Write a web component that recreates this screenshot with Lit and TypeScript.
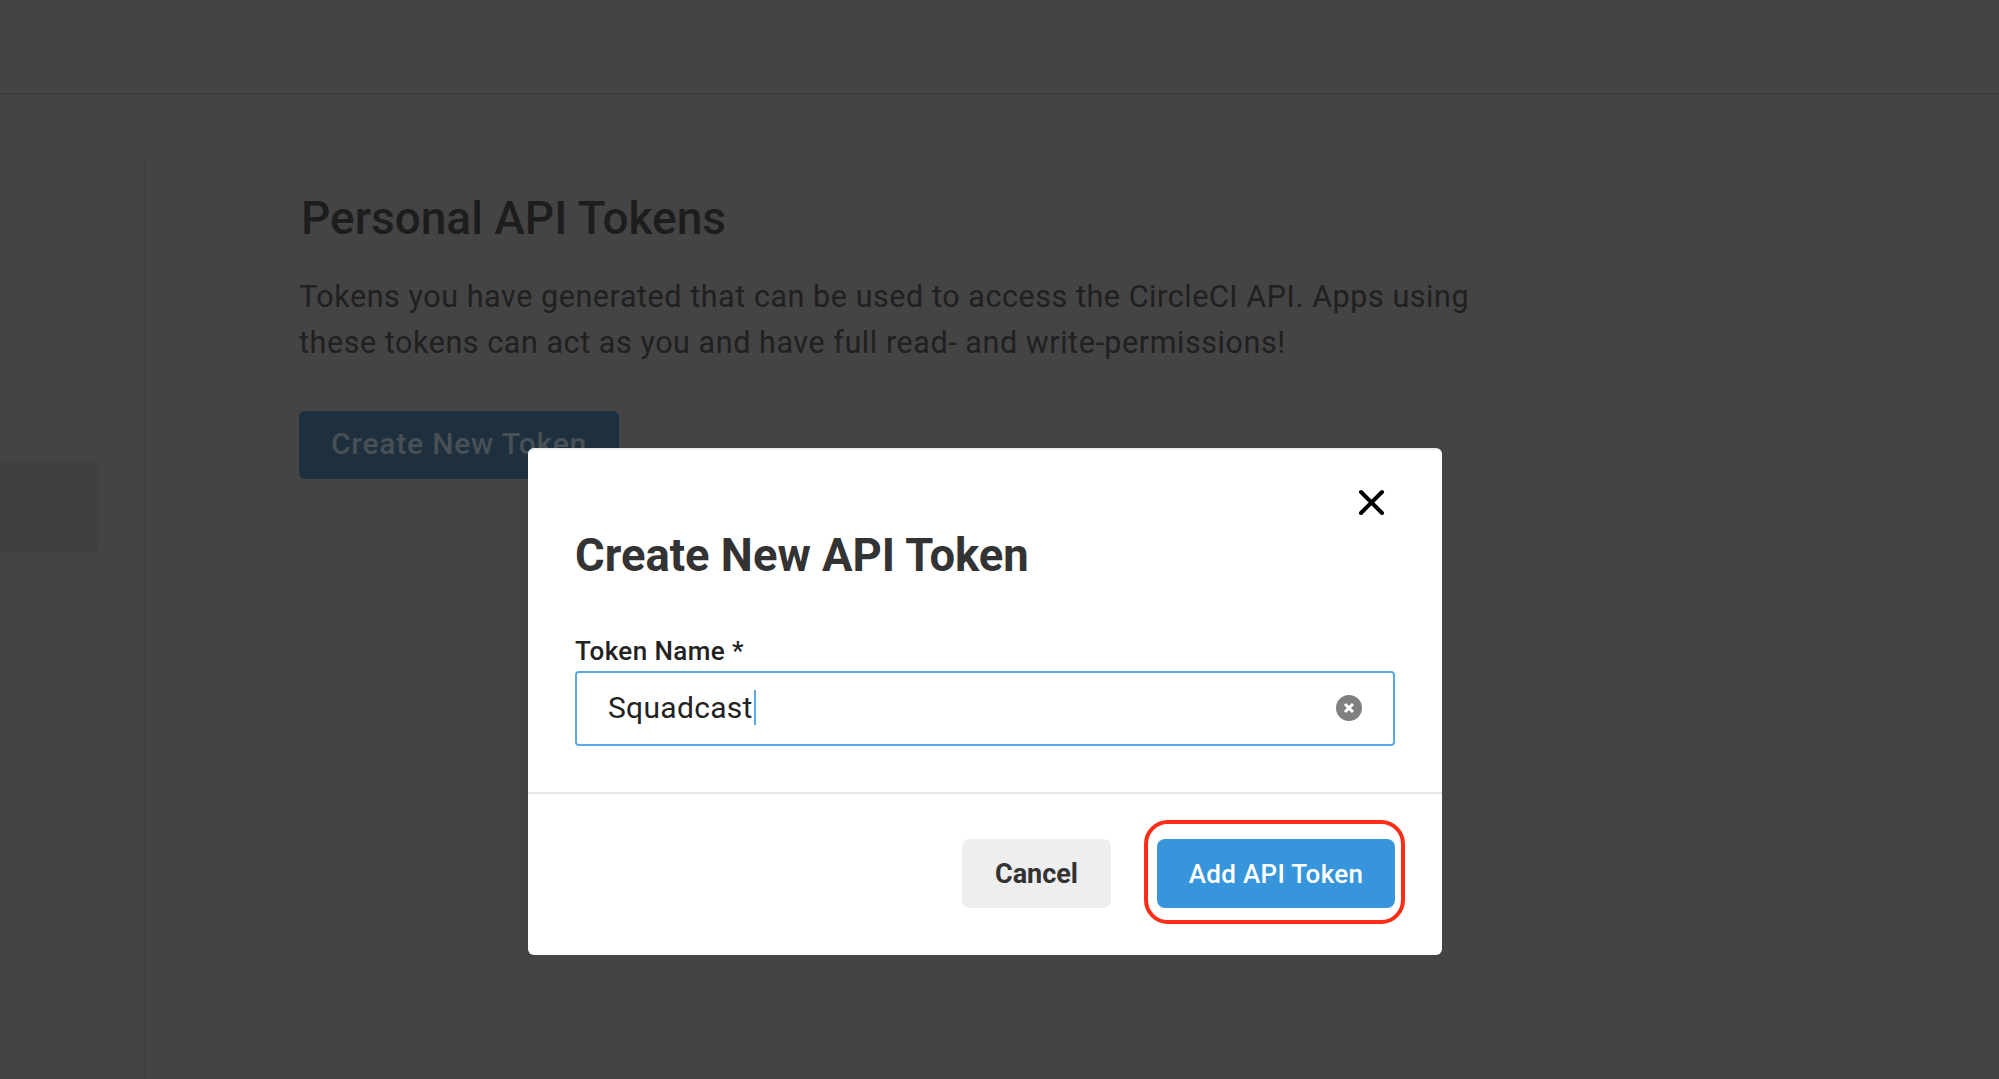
import { LitElement, html, css } from "lit";
import { customElement } from "lit/decorators.js";

@customElement("app-root")
export class AppRoot extends LitElement {
  static styles = css`
    :host { display: block; }
    * { box-sizing: border-box; }
    .page {
      position: relative; width: 1999px; height: 1079px; overflow: hidden;
      background: #444444; font-family: Roboto, "Liberation Sans", sans-serif;
      display: flex; flex-direction: column;
    }
    .topbar { height: 94px; flex: none; border-bottom: 1px solid #383838; }
    .body { flex: 1; display: flex; min-height: 0; }
    .side { width: 146px; flex: none; margin-top: 62px; border-right: 1px solid #3a3a3a; padding-top: 305px; }
    .side-item { width: 99px; height: 91px; background: #404040; border-radius: 0 4px 4px 0; }
    .content { padding: 0 0 0 153px; flex: 1; }
    h1 { margin: 97px 0 0 2px; font-size: 46px; line-height: 54px; font-weight: 500; color: #1d1d1d; }
    p { margin: 29px 0 0; width: 1200px; font-size: 30.5px; line-height: 46px; letter-spacing: 0.56px; color: #202020; }
    .create {
      margin-top: 45px; width: 320px; height: 68px; border-radius: 6px; background: #1e2f3d;
      color: #495055; font-size: 30px; font-weight: 500; letter-spacing: 0.8px; padding-bottom: 3px;
      display: flex; align-items: center; justify-content: center;
    }
    .modal {
      position: absolute; left: 528px; top: 448px; width: 914px; height: 507px;
      background: #fff; border-radius: 6px; border-top: 2px solid #eee;
      display: flex; flex-direction: column;
    }
    .close { position: absolute; top: 39px; right: 57px; width: 27px; height: 27px; display: block; }
    .main { padding: 78px 47px 0 47px; flex: 1; }
    h2 { margin: 0; font-size: 45.4px; line-height: 56px; font-weight: 700; color: #333; }
    label { display: block; margin-top: 52px; font-size: 26px; line-height: 31px; font-weight: 500; letter-spacing: 0.4px; color: #222; }
    .field {
      margin-top: 4px; height: 75px; border: 2px solid #5aa9e6; border-radius: 4px;
      display: flex; align-items: center; justify-content: space-between; padding: 0 31px 2px 31px;
      font-size: 30px; letter-spacing: 0.3px; color: #222;
    }
    .value { display: flex; align-items: center; }
    .caret { width: 2px; height: 35px; background: #5aa9e6; margin-left: 1px; }
    .clear { width: 26px; height: 26px; display: block; }
    .footer {
      height: 163px; flex: none; border-top: 2px solid #e6e6e6;
      display: flex; justify-content: flex-end; align-items: flex-start; gap: 46px;
      padding: 45px 47px 0 0;
    }
    .btn {
      position: relative; height: 69px; border-radius: 8px; display: flex; align-items: center; justify-content: center;
      font-weight: 500;
    }
    .cancel { width: 149px; background: #eee; color: #333; font-size: 27px; font-weight: 700; }
    .add { width: 238px; background: #3795db; color: #fff; font-size: 26px; letter-spacing: 0.3px; }
    .ring {
      position: absolute; left: -13px; right: -10px; top: -19px; bottom: -16px;
      border: 4px solid #ff2d17; border-radius: 24px;
    }
  `;

  render() {
    return html`
      <div class="page">
        <div class="topbar"></div>
        <div class="body">
          <div class="side"><div class="side-item"></div></div>
          <div class="content">
            <h1>Personal API Tokens</h1>
            <p>Tokens you have generated that can be used to access the CircleCI API. Apps using these tokens can act as you and have full read- and write-permissions!</p>
            <div class="create">Create New Token</div>
          </div>
        </div>
        <div class="modal">
          <svg class="close" viewBox="0 0 27 27" fill="none" stroke="#000" stroke-width="4" stroke-linecap="round">
            <path d="M3 3 L24 24 M24 3 L3 24"></path>
          </svg>
          <div class="main">
            <h2>Create New API Token</h2>
            <label>Token Name *</label>
            <div class="field">
              <span class="value">Squadcast<span class="caret"></span></span>
              <svg class="clear" viewBox="0 0 26 26">
                <circle cx="13" cy="13" r="13" fill="#808080"></circle>
                <path d="M9 9 L17 17 M17 9 L9 17" stroke="#fff" stroke-width="3" fill="none"></path>
              </svg>
            </div>
          </div>
          <div class="footer">
            <div class="btn cancel">Cancel</div>
            <div class="btn add">Add API Token<span class="ring"></span></div>
          </div>
        </div>
      </div>
    `;
  }
}
